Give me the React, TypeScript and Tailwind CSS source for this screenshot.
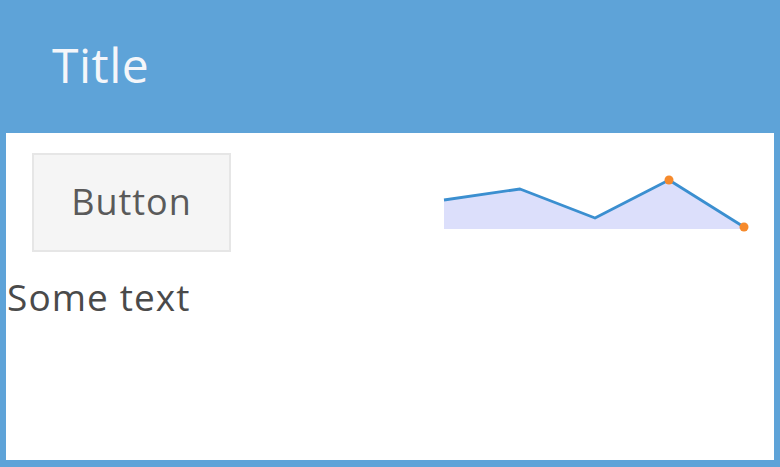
import React from "react";

const points: [number, number][] = [
  [0, 22],
  [76, 11],
  [151, 40],
  [225, 2],
  [300, 49],
];

function Sparkline() {
  const line = points.map(([x, y]) => `${x},${y}`).join(" ");
  const area = `0,51 ${line} 300,51`;
  return (
    <svg width="310" height="56" viewBox="-2 -4 310 56" className="overflow-visible">
      <polygon points={area} fill="#dcdffb" />
      <polyline points={line} fill="none" stroke="#3b8fd0" strokeWidth="2.8" strokeLinejoin="round" />
      <circle cx="225" cy="2" r="4.5" fill="#f68a2c" />
      <circle cx="300" cy="49" r="4.5" fill="#f68a2c" />
    </svg>
  );
}

export default function App() {
  return (
    <div
      className="w-[780px] h-[467px] border-[6px] border-b-[7px] border-t-0 border-[#5ea3d8] bg-white flex flex-col"
      style={{ fontFamily: '"Open Sans", "Noto Sans", sans-serif' }}
    >
      <div className="h-[133px] shrink-0 bg-[#5ea3d8] flex items-center pl-[46px] pb-[4px]">
        <h1 className="text-[48px] tracking-[0.5px] text-[#f4f6fa] leading-none">Title</h1>
      </div>
      <div className="flex items-start justify-between pt-[20px] pl-[26px] pr-[22px]">
        <button className="w-[199px] h-[99px] bg-[#f5f5f5] border-2 border-[#e6e6e6] text-[36px] tracking-[1px] text-[#5a5a5a] flex items-center justify-center pb-[2px]">
          Button
        </button>
        <div className="pt-[21px]">
          <Sparkline />
        </div>
      </div>
      <p className="text-[37px] tracking-[1.1px] text-[#4a4a4a] leading-none pl-[1px] pt-[26px]">Some text</p>
    </div>
  );
}
